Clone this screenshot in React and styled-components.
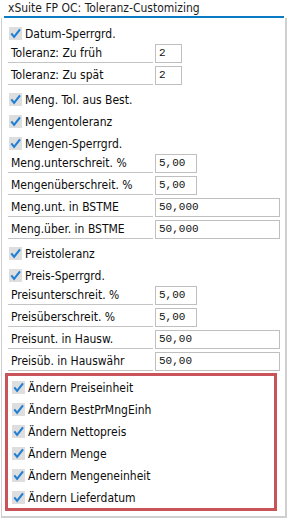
import React from "react";
import styled, { createGlobalStyle } from "styled-components";

const GlobalStyle = createGlobalStyle`
  html, body {
    margin: 0;
    padding: 0;
    background: #ffffff;
  }
  * {
    box-sizing: border-box;
  }
`;

const fields = [
  { type: "check", label: "Datum-Sperrgrd." },
  { type: "input", label: "Toleranz: Zu früh", value: "2", size: "s" },
  { type: "input", label: "Toleranz: Zu spät", value: "2", size: "s" },
  { type: "check", label: "Meng. Tol. aus Best." },
  { type: "check", label: "Mengentoleranz" },
  { type: "check", label: "Mengen-Sperrgrd." },
  { type: "input", label: "Meng.unterschreit. %", value: "5,00", size: "m" },
  { type: "input", label: "Mengenüberschreit. %", value: "5,00", size: "m" },
  { type: "input", label: "Meng.unt. in BSTME", value: "50,000", size: "l" },
  { type: "input", label: "Meng.über. in BSTME", value: "50,000", size: "l" },
  { type: "check", label: "Preistoleranz" },
  { type: "check", label: "Preis-Sperrgrd." },
  { type: "input", label: "Preisunterschreit. %", value: "5,00", size: "m" },
  { type: "input", label: "Preisüberschreit. %", value: "5,00", size: "m" },
  { type: "input", label: "Preisunt. in Hausw.", value: "50,00", size: "l" },
  { type: "input", label: "Preisüb. in Hauswähr", value: "50,00", size: "l" },
];

const changes = [
  "Ändern Preiseinheit",
  "Ändern BestPrMngEinh",
  "Ändern Nettopreis",
  "Ändern Menge",
  "Ändern Mengeneinheit",
  "Ändern Lieferdatum",
];

const widths = { s: 27, m: 42, l: 125 };

function CheckIcon() {
  return (
    <svg width="13" height="13" viewBox="0 0 13 13">
      <rect x="0" y="0" width="13" height="13" fill="#dedede" />
      <path
        d="M2.3 6.4 L5.1 9.8 L11 2.4"
        fill="none"
        stroke="#1f7fd4"
        strokeWidth="2.1"
        strokeLinejoin="miter"
      />
    </svg>
  );
}

function CheckField({ label }) {
  return (
    <CheckRow>
      <CheckIcon />
      <span>{label}</span>
    </CheckRow>
  );
}

function InputField({ label, value, size }) {
  return (
    <InputRow>
      <Label>{label}</Label>
      <ValueBox $width={widths[size]}>{value}</ValueBox>
    </InputRow>
  );
}

function App() {
  return (
    <>
      <GlobalStyle />
      <Screen>
        <Title>xSuite FP OC: Toleranz-Customizing</Title>
        <Panel>
          {fields.map((f) =>
            f.type === "check" ? (
              <CheckField key={f.label} label={f.label} />
            ) : (
              <InputField key={f.label} {...f} />
            )
          )}
          <Marked>
            {changes.map((c) => (
              <CheckField key={c} label={c} />
            ))}
          </Marked>
        </Panel>
      </Screen>
    </>
  );
}

const Screen = styled.div`
  width: 288px;
  height: 521px;
  background: #ffffff;
  font-family: "DejaVu Sans Condensed", "Liberation Sans", sans-serif;
  font-size: 12px;
  color: #0c0c0c;
  display: flex;
  flex-direction: column;
`;

const Title = styled.div`
  height: 18px;
  margin: 0 4px;
  padding: 1px 0 0 4px;
  font-size: 12px;
  line-height: 14px;
  color: #1c1c1c;
  border-bottom: 2px solid #0a7bc4;
`;

const Panel = styled.div`
  width: 286px;
  height: 500px;
  margin-left: 1px;
  padding: 4px 0 0 6px;
  border-left: 1px solid #cfcfcf;
  border-right: 2px solid #cfcfcf;
  border-bottom: 2px solid #cfcfcf;
  display: flex;
  flex-direction: column;
`;

const CheckRow = styled.div`
  height: 22px;
  display: flex;
  align-items: center;
  gap: 3px;
  padding: 1px 0 0 1px;
  white-space: nowrap;
  svg {
    flex-shrink: 0;
  }
`;

const InputRow = styled.div`
  height: 22px;
  display: flex;
  align-items: flex-start;
  gap: 2px;
`;

const Label = styled.div`
  width: 145px;
  height: 19px;
  line-height: 19px;
  padding-left: 3px;
  border-bottom: 1px solid #c4c4c4;
  white-space: nowrap;
`;

const ValueBox = styled.div`
  width: ${(p) => p.$width}px;
  height: 19px;
  border: 1px solid #bfbfbf;
  padding-left: 3px;
  font-family: "Liberation Mono", monospace;
  font-size: 11px;
  line-height: 17px;
  color: #111111;
`;

const Marked = styled.div`
  width: 272px;
  margin: -1px 0 0 -3px;
  padding-left: 3px;
  border: 3px solid #c85459;
  display: flex;
  flex-direction: column;
`;

export default App;
